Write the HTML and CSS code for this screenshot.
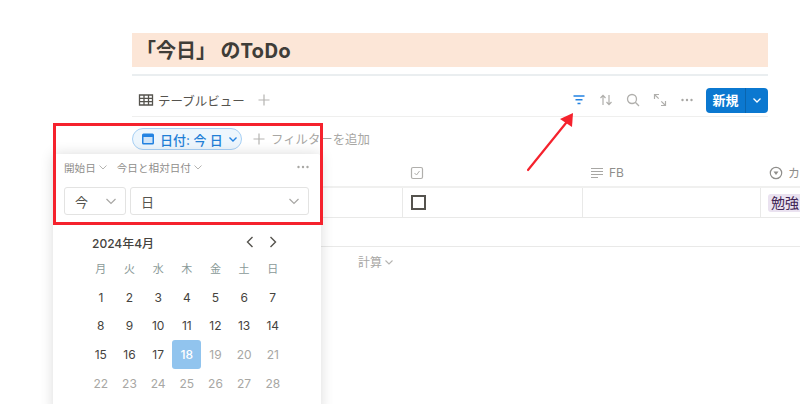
FILE: index.html
```html
<!DOCTYPE html>
<html lang="ja">
<head>
<meta charset="utf-8">
<title>ToDo</title>
<link rel="stylesheet" href="styles.css">
</head>
<body>
<main class="page">
  <h1 class="title">「今日」 のToDo</h1>
  <div class="toolbar">
    <div class="tab">
      <svg class="ic16" viewBox="0 0 16 16"><path d="M1.500 3h13v10h-13zM1.500 6.300h13M1.500 9.600h13M6 3v10M10.500 3v10" fill="none" stroke="#55534e" stroke-width="1.300"/></svg>
      <span>テーブルビュー</span>
      <svg class="plus" viewBox="0 0 12 12"><path d="M6 .5v11M.5 6h11" stroke="#b5b4b1" stroke-width="1.200"/></svg>
    </div>
    <div class="actions">
      <svg class="ic14" viewBox="0 0 14 14"><path d="M1.500 3h11M3.500 6.800h7M5.500 10.600h3" stroke="#2383e2" stroke-width="1.500"/></svg>
      <svg class="ic14" viewBox="0 0 14 14"><path d="M4 12V2.500M1.500 5L4 2.300 6.500 5M10 2v9.500M7.500 9l2.500 2.700L12.500 9" fill="none" stroke="#b0afac" stroke-width="1.200"/></svg>
      <svg class="ic14" viewBox="0 0 14 14"><circle cx="6" cy="6" r="4.500" fill="none" stroke="#b0afac" stroke-width="1.300"/><path d="M9.300 9.300L13 13" stroke="#b0afac" stroke-width="1.300"/></svg>
      <svg class="ic14" viewBox="0 0 14 14"><path d="M1.500 1.500l4.200 4.200M8.300 8.300l4.200 4.200M1.500 6V1.500H6M12.500 8v4.500H8" fill="none" stroke="#b0afac" stroke-width="1.200"/></svg>
      <svg class="ic14" viewBox="0 0 14 14"><circle cx="2.500" cy="7" r="1.200" fill="#a8a7a4"/><circle cx="7" cy="7" r="1.200" fill="#a8a7a4"/><circle cx="11.500" cy="7" r="1.200" fill="#a8a7a4"/></svg>
      <div class="new">
        <span class="new-label">新規</span>
        <span class="new-arrow"><svg class="chev" viewBox="0 0 10 10"><path d="M1.500 3.500L5 7l3.500-3.500" fill="none" stroke="#fff" stroke-width="1.300"/></svg></span>
      </div>
    </div>
  </div>
  <div class="filters">
    <div class="pill">
      <svg class="ic14" viewBox="0 0 14 14"><rect x="1" y="1.500" width="12" height="11" rx="1.500" fill="#2383e2"/><rect x="2.500" y="5" width="9" height="6" fill="#cfe4f8"/></svg>
      <span>日付: 今 日</span>
      <svg class="chev" viewBox="0 0 10 10"><path d="M1.500 3.500L5 7l3.500-3.500" fill="none" stroke="#2383e2" stroke-width="1.400"/></svg>
    </div>
    <div class="add-filter">
      <svg class="plus" viewBox="0 0 12 12"><path d="M6 .5v11M.5 6h11" stroke="#b5b4b1" stroke-width="1.200"/></svg>
      <span>フィルターを追加</span>
    </div>
  </div>
  <div class="table">
    <div class="row head">
      <div class="cell c1"></div>
      <div class="cell c2"><svg class="ic14" viewBox="0 0 14 14"><rect x="1.500" y="1.500" width="11" height="11" rx="1.500" fill="none" stroke="#b0afac" stroke-width="1.200"/><path d="M4.500 7l2 2 3-4" fill="none" stroke="#b0afac" stroke-width="1"/></svg></div>
      <div class="cell c3"><svg class="ic14" viewBox="0 0 14 14"><path d="M1 2.500h12M1 5.500h12M1 8.500h12M1 11.500h7" stroke="#a8a7a4" stroke-width="1.100"/></svg><span>FB</span></div>
      <div class="cell c4"><svg class="ic14" viewBox="0 0 14 14"><circle cx="7" cy="7" r="5.700" fill="none" stroke="#8f8e8b" stroke-width="1.200"/><path d="M4.500 5.500h5L7 9z" fill="#8f8e8b"/></svg><span>カテゴリ</span></div>
    </div>
    <div class="row body">
      <div class="cell c1"></div>
      <div class="cell c2"><span class="checkbox"></span></div>
      <div class="cell c3"></div>
      <div class="cell c4"><span class="tag">勉強</span></div>
    </div>
    <div class="row blank"></div>
    <div class="calc">計算 <svg class="chev" viewBox="0 0 10 10"><path d="M1.500 3.500L5 7l3.500-3.500" fill="none" stroke="#b5b4b1" stroke-width="1.100"/></svg></div>
  </div>
</main>

<section class="popup">
  <div class="popup-top">
    <span class="crumb">開始日 <svg class="chev" viewBox="0 0 10 10"><path d="M1.500 3.500L5 7l3.500-3.500" fill="none" stroke="#b5b4b1" stroke-width="1"/></svg></span>
    <span class="crumb">今日と相対日付 <svg class="chev" viewBox="0 0 10 10"><path d="M1.500 3.500L5 7l3.500-3.500" fill="none" stroke="#b5b4b1" stroke-width="1"/></svg></span>
    <svg class="dots" viewBox="0 0 14 14"><circle cx="2.500" cy="7" r="1.200" fill="#a8a7a4"/><circle cx="7" cy="7" r="1.200" fill="#a8a7a4"/><circle cx="11.500" cy="7" r="1.200" fill="#a8a7a4"/></svg>
  </div>
  <div class="selects">
    <div class="select s1"><span>今</span><svg class="chev-lg" viewBox="0 0 12 12"><path d="M1.500 4L6 8.500 10.500 4" fill="none" stroke="#a8a7a4" stroke-width="1.200"/></svg></div>
    <div class="select s2"><span>日</span><svg class="chev-lg" viewBox="0 0 12 12"><path d="M1.500 4L6 8.500 10.500 4" fill="none" stroke="#a8a7a4" stroke-width="1.200"/></svg></div>
  </div>
  <div class="cal-head">
    <span class="month">2024年4月</span>
    <span class="nav">
      <svg class="nav-ic" viewBox="0 0 12 12"><path d="M8.500 1L3.500 6l5 5" fill="none" stroke="#55534e" stroke-width="1.400"/></svg>
      <svg class="nav-ic" viewBox="0 0 12 12"><path d="M3.500 1l5 5-5 5" fill="none" stroke="#55534e" stroke-width="1.400"/></svg>
    </span>
  </div>
  <div class="cal">
    <span class="wd">月</span><span class="wd">火</span><span class="wd">水</span><span class="wd">木</span><span class="wd">金</span><span class="wd">土</span><span class="wd">日</span>
    <span class="d">1</span><span class="d">2</span><span class="d">3</span><span class="d">4</span><span class="d">5</span><span class="d">6</span><span class="d">7</span>
    <span class="d">8</span><span class="d">9</span><span class="d">10</span><span class="d">11</span><span class="d">12</span><span class="d">13</span><span class="d">14</span>
    <span class="d">15</span><span class="d">16</span><span class="d">17</span><span class="d today">18</span><span class="d off">19</span><span class="d off">20</span><span class="d off">21</span>
    <span class="d off">22</span><span class="d off">23</span><span class="d off">24</span><span class="d off">25</span><span class="d off">26</span><span class="d off">27</span><span class="d off">28</span>
  </div>
</section>

<div class="redbox"></div>
<svg class="arrow" viewBox="0 0 60 64"><path d="M2 60L40 13" stroke="#f5222d" stroke-width="2.200" stroke-linecap="round"/><path d="M47 3L46 17 34 9z" fill="#f5222d"/></svg>
</body>
</html>
```
FILE: styles.css
```css
* { box-sizing: border-box; }
html, body { margin: 0; height: 404px; overflow: hidden; background: #fff; }
body {
  position: relative;
  font-family: Inter, "Noto Sans CJK JP", sans-serif;
  color: #37352f;
}
svg { display: block; flex: none; }
.ic16 { width: 16px; height: 16px; }
.ic14 { width: 14px; height: 14px; }
.plus { width: 12px; height: 12px; }
.chev { width: 10px; height: 10px; }
.chev-lg { width: 12px; height: 12px; }

.page { padding: 33px 32px 0 132px; width: 800px; }
.title {
  margin: 0;
  height: 34px;
  padding-left: 4px;
  background: #fce6d7;
  font-family: "Noto Sans CJK JP", sans-serif;
  font-size: 20px;
  font-weight: 700;
  line-height: 34px;
  color: #3f3d38;
  white-space: pre;
}
.toolbar {
  margin-top: 7px;
  height: 43px;
  padding-top: 8px;
  display: flex;
  align-items: center;
  justify-content: space-between;
  border-top: 2px solid #eaeef0;
  border-bottom: 1px solid #efefee;
}
.tab { display: flex; align-items: center; gap: 4px; padding-left: 6px; font-size: 12.500px; color: #55534e; }
.tab .plus { margin-left: 9px; }
.actions { display: flex; align-items: center; gap: 13px; }
.new {
  display: flex;
  height: 25px;
  margin-left: -1px;
  width: 62px;
  border-radius: 4px;
  background: #0b78d0;
  color: #fff;
  font-size: 13px;
  font-weight: 600;
  overflow: hidden;
}
.new-label { width: 40px; line-height: 25px; text-align: center; border-right: 1px solid #0a65ae; }
.new-arrow { flex: 1; display: flex; align-items: center; justify-content: center; }

.filters { display: flex; align-items: center; gap: 11px; margin-top: 11px; height: 22px; }
.pill {
  display: flex;
  align-items: center;
  gap: 5px;
  width: 110px;
  height: 22px;
  padding: 0 6px 0 8px;
  border: 1px solid #a7d0f5;
  border-radius: 11px;
  background: #edf6fd;
  color: #1f7fd6;
  font-size: 13px;
  font-weight: 500;
  white-space: nowrap;
}
.add-filter { display: flex; align-items: center; gap: 6px; color: #a8a7a4; font-size: 12.400px; }

.table { margin-top: 11px; width: 668px; }
.row { display: flex; }
.head { height: 27px; padding-bottom: 2px; border-bottom: 2px solid #f0f0ef; }
.body { height: 30px; border-bottom: 1px solid #e9e9e8; }
.blank { height: 29px; border-bottom: 1px solid #e9e9e8; }
.cell { display: flex; align-items: center; gap: 5px; }
.c1 { width: 270px; }
.c2 { width: 180px; padding-left: 8px; }
.c3 { width: 178px; padding-left: 8px; }
.c4 { width: 40px; padding-left: 9px; white-space: nowrap; overflow: hidden; }
.head .c3 { color: #8f8e8b; font-size: 12px; }
.head .c4 { color: #8f8e8b; font-size: 12px; }
.body .c2, .body .c3, .body .c4 { border-left: 1px solid #e9e9e8; }
.body .c4 { padding-left: 7px; }
.checkbox { width: 15px; height: 15px; border: 2px solid #55534e; }
.tag {
  flex: none;
  height: 18px;
  padding: 0 3px;
  border-radius: 3px;
  background: #eae2f0;
  color: #412454;
  font-size: 14px;
  line-height: 18px;
}
.calc {
  display: flex;
  align-items: center;
  gap: 2px;
  height: 29px;
  padding-left: 226px;
  color: #a8a7a4;
  font-size: 12px;
}

.popup {
  position: absolute;
  left: 53px;
  top: 154px;
  width: 268px;
  height: 262px;
  padding: 0 11px;
  background: #fff;
  border-radius: 4px 4px 0 0;
  box-shadow: 0 0 14px rgba(15, 15, 15, .14);
}
.popup-top { display: flex; align-items: center; gap: 9px; height: 26px; font-size: 10.600px; color: #8f8e8b; }
.crumb { display: flex; align-items: center; gap: 2px; white-space: nowrap; }
.dots { margin-left: auto; width: 14px; height: 14px; }
.selects { display: flex; gap: 4px; margin-top: 7px; }
.select {
  display: flex;
  align-items: center;
  justify-content: space-between;
  height: 28px;
  padding: 0 8px 0 10px;
  border: 1px solid #e3e3e2;
  border-radius: 3px;
  font-size: 13px;
  color: #55534e;
}
.s1 { width: 62px; }
.s2 { width: 179px; }
.cal-head {
  display: flex;
  justify-content: space-between;
  align-items: center;
  height: 20px;
  margin-top: 17px;
  padding: 0 31px 0 28px;
}
.month { font-size: 12px; font-weight: 500; color: #45433e; }
.nav { display: flex; gap: 11px; }
.nav-ic { width: 12px; height: 12px; }
.cal {
  display: grid;
  grid-template-columns: repeat(7, 28.67px);
  grid-template-rows: 30px;
  grid-auto-rows: 28.67px;
  margin: 1px 0 0 22.500px;
  justify-items: center;
  align-items: center;
  font-size: 12px;
}
.wd { color: #8a9a98; font-size: 11px; }
.d { display: flex; align-items: center; justify-content: center; width: 100%; height: 100%; color: #45433e; }
.off { color: #a8a7a4; }
.today { background: #91c4ee; color: #fff; border-radius: 3px; font-weight: 500; }

.redbox {
  position: absolute;
  left: 53px;
  top: 123px;
  width: 270px;
  height: 102px;
  border: 3px solid #f5222d;
}
.arrow { position: absolute; left: 526px; top: 110px; width: 60px; height: 64px; }
```
